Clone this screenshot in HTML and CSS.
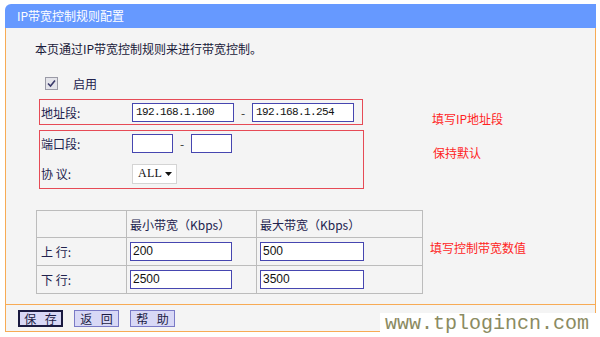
FILE: index.html
```html
<!DOCTYPE html>
<html lang="zh-CN">
<head>
<meta charset="utf-8">
<title>IP带宽控制规则配置</title>
<link rel="stylesheet" href="styles.css">
</head>
<body>
<div class="panel">
  <div class="title">IP带宽控制规则配置</div>
  <div class="main">
    <p class="intro">本页通过IP带宽控制规则来进行带宽控制。</p>
    <div class="enable">
      <span class="check"><svg width="9" height="9" viewBox="0 0 9 9"><path d="M1 4.5 L3.5 7 L8 1.5" fill="none" stroke="#3a3a6a" stroke-width="1.6"/></svg></span>
      <span class="enable-label">启用</span>
    </div>
    <div class="section">
      <div class="box box-addr">
        <span class="label">地址段:</span>
        <span class="field ip">192.168.1.100</span>
        <span class="dash">-</span>
        <span class="field ip">192.168.1.254</span>
      </div>
      <div class="note note-addr">填写IP地址段</div>
    </div>
    <div class="section">
      <div class="box box-port">
        <div class="row">
          <span class="label">端口段:</span>
          <span class="field port"></span>
          <span class="dash dash-port">-</span>
          <span class="field port"></span>
        </div>
        <div class="row row-proto">
          <span class="label">协 议:</span>
          <span class="select"><span class="opt">ALL</span><svg width="7" height="4" viewBox="0 0 7 4"><path d="M0 0 H7 L3.5 4 Z" fill="#111"/></svg></span>
        </div>
      </div>
      <div class="note note-port">保持默认</div>
    </div>
    <div class="section">
      <div class="bw">
        <div class="cell"></div>
        <div class="cell head">最小带宽（Kbps）</div>
        <div class="cell head">最大带宽（Kbps）</div>
        <div class="cell lbl">上 行:</div>
        <div class="cell"><span class="field num">200</span></div>
        <div class="cell"><span class="field num">500</span></div>
        <div class="cell lbl">下 行:</div>
        <div class="cell"><span class="field num">2500</span></div>
        <div class="cell"><span class="field num">3500</span></div>
      </div>
      <div class="note note-bw">填写控制带宽数值</div>
    </div>
  </div>
  <div class="footer">
    <span class="btn btn-focus">保 存</span>
    <span class="btn">返 回</span>
    <span class="btn">帮 助</span>
  </div>
</div>
<div class="watermark">www.tplogincn.com</div>
</body>
</html>
```
FILE: styles.css
```css
html, body {
  margin: 0;
  padding: 0;
  background: #ffffff;
}
body {
  font-family: "Noto Sans CJK SC", "Noto Sans", sans-serif;
  font-size: 12px;
  color: #22224e;
  width: 600px;
  height: 337px;
  overflow: hidden;
  position: relative;
}
.panel {
  margin: 4px 0 0 5px;
  width: 591px;
}
.title {
  height: 24px;
  line-height: 23px;
  background: #6699ff;
  color: #ffffff;
  padding-left: 12px;
  border-radius: 6px 0 0 0;
  box-sizing: border-box;
}
.main {
  background: #f4f4f4;
  border-left: 1px solid #f7ab55;
  border-right: 1px solid #f7ab55;
  border-bottom: 1px solid #f7ab55;
  height: 277px;
  box-sizing: border-box;
  display: flex;
  flex-direction: column;
}
.intro {
  margin: 11px 0 0 29px;
  line-height: 20px;
  color: #1a1a3a;
}
.enable {
  margin: 14px 0 0 39px;
  height: 20px;
  display: flex;
  align-items: center;
}
.check {
  width: 11px;
  height: 11px;
  border: 1px solid #9a9aa6;
  background: #e4e4ea;
  display: flex;
  align-items: center;
  justify-content: center;
}
.enable-label {
  margin-left: 15px;
}
.section {
  display: flex;
  align-items: flex-start;
}
.box {
  border: 1px solid #e64a55;
  box-sizing: border-box;
  margin-left: 33px;
}
.box-addr {
  margin-top: 6px;
  width: 324px;
  height: 26px;
  display: flex;
  align-items: center;
  padding-left: 1px;
}
.label {
  width: 91px;
  flex: none;
}
.field {
  display: inline-block;
  box-sizing: border-box;
  height: 19px;
  border: 1px solid #4646b0;
  background: #ffffff;
  color: #111111;
  line-height: 17px;
  padding-left: 3px;
  flex: none;
}
.ip {
  width: 102px;
  font-family: "Liberation Mono", monospace;
  font-size: 11px;
  letter-spacing: -0.6px;
}
.dash {
  width: 18px;
  text-align: center;
  color: #333;
}
.box-port {
  margin-top: 5px;
  width: 325px;
  height: 59px;
  padding: 2px 0 0 1px;
}
.row {
  height: 21px;
  display: flex;
  align-items: center;
}
.row-proto {
  margin-top: 9px;
}
.port {
  width: 41px;
}
.dash-port {
  width: 18px;
}
.select {
  box-sizing: border-box;
  width: 45px;
  height: 20px;
  border: 1px solid #d4d4d4;
  background: #ffffff;
  display: flex;
  align-items: center;
  padding: 0 0 0 5px;
  font-family: "Liberation Serif", serif;
  font-size: 12px;
  color: #111;
}
.opt {
  width: 27px;
  letter-spacing: 0.3px;
}
.note {
  color: #ff1f1f;
  line-height: 16px;
  margin-bottom: -20px;
}
.note-addr {
  margin-top: 18px;
  margin-left: 69px;
}
.note-port {
  margin-top: 20px;
  margin-left: 69px;
}
.bw {
  margin: 21px 0 0 30px;
  display: grid;
  grid-template-columns: 89px 129px 165px;
  grid-template-rows: 26px 27px 27px;
  gap: 1px;
  padding: 1px;
  background: #bcbcbc;
}
.cell {
  background: #f4f4f4;
  display: flex;
  align-items: center;
  padding-left: 3px;
}
.lbl {
  padding-left: 4px;
}
.num {
  width: 102px;
  font-family: "Liberation Sans", sans-serif;
  font-size: 12px;
  padding-left: 2px;
}
.cell:nth-child(6) .num,
.cell:nth-child(9) .num {
  width: 104px;
}
.note-bw {
  margin-top: 51px;
  margin-left: 7px;
}
.footer {
  height: 27px;
  background: #f4f4f4;
  border-bottom: 1px solid #f7ab55;
  border-left: 1px solid #f7ab55;
  border-right: 1px solid #f7ab55;
  box-sizing: border-box;
  display: flex;
  align-items: flex-start;
  padding: 5px 0 0 12px;
  gap: 11px;
}
.btn {
  box-sizing: border-box;
  width: 45px;
  height: 17px;
  border: 1px solid #7a7ac6;
  background: #d8d8f6;
  color: #1c1c44;
  text-align: center;
  line-height: 15px;
  letter-spacing: 3px;
  text-indent: 3px;
}
.btn-focus {
  border: 2px solid #1a1a40;
  line-height: 13px;
}
.watermark {
  position: absolute;
  left: 380px;
  top: 313px;
  width: 220px;
  height: 24px;
  background: #ffffff;
  padding-left: 5px;
  box-sizing: border-box;
  font-family: "Liberation Mono", monospace;
  font-size: 20px;
  line-height: 22px;
  color: #8b8b62;
}
```
